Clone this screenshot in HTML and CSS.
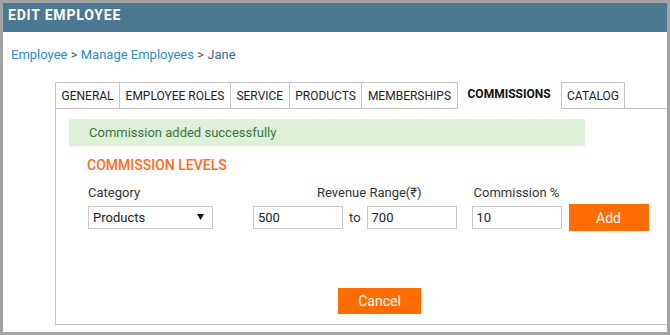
FILE: index.html
```html
<!DOCTYPE html>
<html lang="en">
<head>
  <meta charset="UTF-8">
  <meta name="viewport" content="width=device-width, initial-scale=1.0">
  <title>Edit Employee</title>
  <link rel="stylesheet" href="styles.css">
</head>
<body>
  <div class="frame">
    <div class="header">EDIT EMPLOYEE</div>

    <div class="crumbs">
      <a href="#">Employee</a> <span class="sep">&gt;</span> <a href="#">Manage Employees</a> <span class="sep">&gt;</span> <span class="current">Jane</span>
    </div>

    <div class="tabs-area">
      <ul class="tabs">
        <li class="tab">GENERAL</li>
        <li class="tab">EMPLOYEE ROLES</li>
        <li class="tab">SERVICE</li>
        <li class="tab">PRODUCTS</li>
        <li class="tab">MEMBERSHIPS</li>
        <li class="tab active">COMMISSIONS</li>
        <li class="tab">CATALOG</li>
      </ul>

      <div class="panel">
        <div class="alert">Commission added successfully</div>

        <h2 class="section-title">COMMISSION LEVELS</h2>

        <div class="form-row">
          <div class="field field-category">
            <label>Category</label>
            <div class="select-wrap">
              <select class="select">
                <option>Products</option>
                <option>Services</option>
              </select>
              <!-- little black arrow drawn over the select -->
              <svg class="select-arrow" width="7" height="6" viewBox="0 0 7 6"><path d="M0 0 H7 L3.5 6 Z" fill="#111"/></svg>
            </div>
          </div>

          <div class="field field-range">
            <label>Revenue Range(₹)</label>
            <div class="range">
              <input class="input" type="text" value="500">
              <span class="to">to</span>
              <input class="input" type="text" value="700">
            </div>
          </div>

          <div class="field field-percent">
            <label>Commission %</label>
            <input class="input" type="text" value="10">
          </div>

          <button class="btn btn-add">Add</button>
        </div>

        <div class="actions">
          <button class="btn btn-cancel">Cancel</button>
        </div>
      </div>
    </div>
  </div>
</body>
</html>
```

FILE: styles.css
```css
* {
  box-sizing: border-box;
}

body {
  margin: 0;
  font-family: Roboto, "Liberation Sans", sans-serif;
  color: #333;
  background: #fff;
}

.frame {
  width: 670px;
  height: 335px;
  border: 3px solid #a3a3a3;
  background: #fff;
  overflow: hidden;
}

.header {
  height: 29px;
  padding: 4px 0 0 5px;
  background: #4b7994;
  color: #fff;
  font-size: 14px;
  font-weight: 700;
  line-height: 17px;
  letter-spacing: 0.8px;
}

.crumbs {
  margin: 15px 0 0 8px;
  font-size: 13px;
  line-height: 16px;
  color: #555;
}

.crumbs a {
  color: #2b8cc4;
  text-decoration: none;
}

.crumbs .current {
  color: #3b6b8c;
}

.tabs-area {
  margin: 19px 0 0 52px;
}

.tabs {
  display: flex;
  margin: 0;
  padding: 0;
  list-style: none;
}

.tab {
  height: 26px;
  padding: 1px 5.5px 0;
  border: 1px solid #c4c4c4;
  border-left: none;
  border-bottom: none;
  font-size: 12px;
  line-height: 24px;
  color: #222;
  white-space: nowrap;
}

.tab:first-child {
  border-left: 1px solid #c4c4c4;
}

.tab.active {
  position: relative;
  margin-bottom: -1px;
  height: 27px;
  padding: 0 9px 0 10px;
  border-color: transparent;
  background: #fff;
  font-weight: 700;
  color: #111;
  line-height: 22px;
}

.tab.active + .tab {
  border-left: 1px solid #c4c4c4;
}

.panel {
  height: 217px;
  border-top: 1px solid #c4c4c4;
  border-left: 1px solid #c4c4c4;
  border-bottom: 1px solid #c4c4c4;
  padding: 10px 0 0 13px;
}

.alert {
  width: 516px;
  height: 27px;
  padding-left: 20px;
  background: #dff0d8;
  color: #3c763d;
  font-size: 13px;
  line-height: 27px;
}

.section-title {
  margin: 11px 0 0 18px;
  font-size: 14px;
  font-weight: 500;
  line-height: 17px;
  color: #ff6a1f;
}

.form-row {
  display: flex;
  align-items: flex-end;
  margin: 11px 0 0 19px;
}

.field {
  display: flex;
  flex-direction: column;
}

.field label {
  font-size: 13px;
  line-height: 16px;
  color: #333;
  margin-bottom: 5px;
}

.field-category {
  width: 125px;
  margin-bottom: 2px;
}

.select-wrap {
  position: relative;
}

.select {
  width: 125px;
  height: 23px;
  padding: 0 0 0 4px;
  border: 1px solid #c8c8c8;
  background: #fff;
  font-family: inherit;
  font-size: 13px;
  color: #222;
  appearance: none;
  -webkit-appearance: none;
  border-radius: 0;
}

.select-arrow {
  position: absolute;
  right: 9px;
  top: 8px;
}

.field-range {
  margin-left: 40px;
  margin-bottom: 2px;
}

.field-range label {
  padding-left: 64px;
}

.range {
  display: flex;
  align-items: center;
}

.to {
  margin: 0 6px;
  font-size: 13px;
  color: #333;
}

.input {
  width: 90px;
  height: 23px;
  padding: 0 4px;
  border: 1px solid #c8c8c8;
  font-family: inherit;
  font-size: 13px;
  color: #222;
  border-radius: 0;
}

.field-percent {
  margin-left: 15px;
  margin-bottom: 2px;
}

.field-percent label {
  padding-left: 2px;
}

.btn {
  border: none;
  border-radius: 0;
  background: #ff6d00;
  color: #fff;
  font-family: inherit;
  font-size: 14px;
  cursor: pointer;
}

.btn-add {
  width: 80px;
  height: 27px;
  margin-left: 7px;
}

.actions {
  margin: 57px 0 0 269px;
}

.btn-cancel {
  width: 83px;
  height: 26px;
}
```
